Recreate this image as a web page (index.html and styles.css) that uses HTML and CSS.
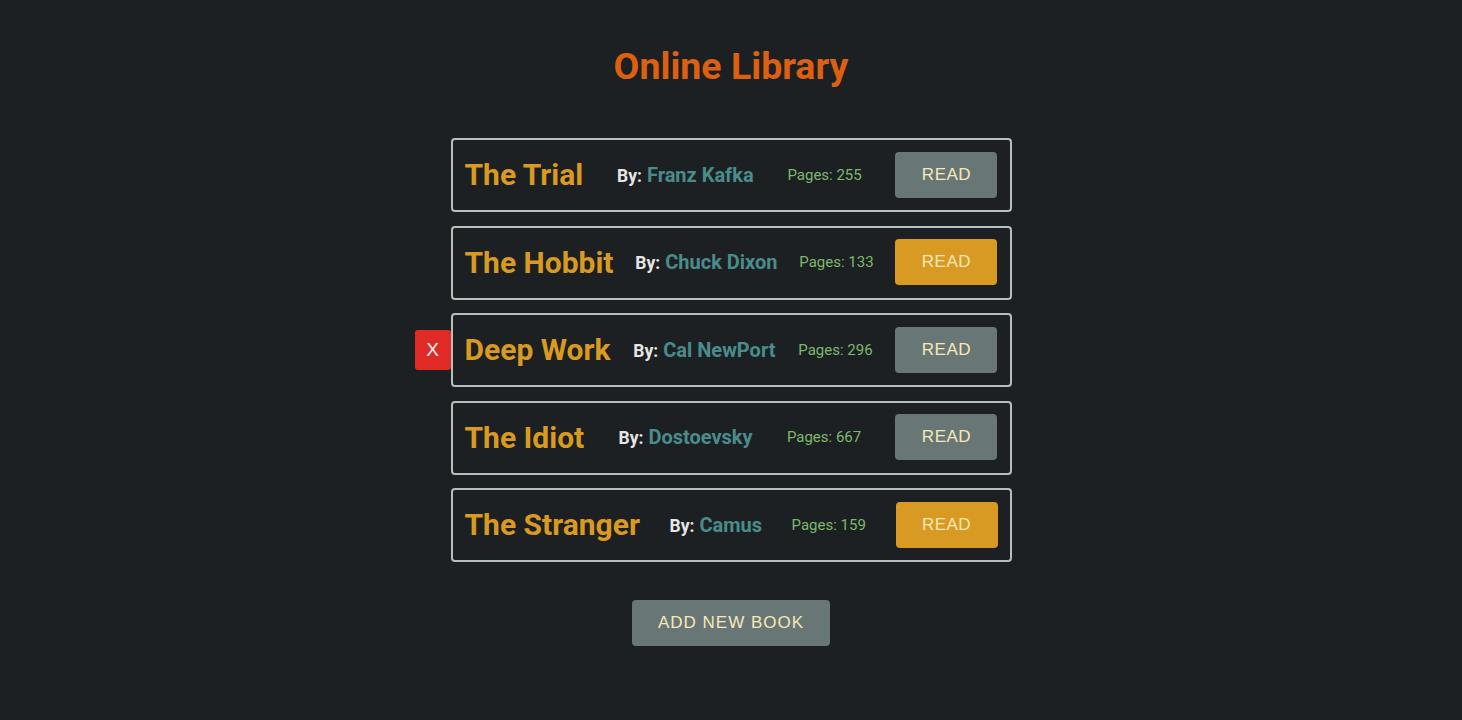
FILE: index.html
```html
<!DOCTYPE html>
<html>
<head>
<meta charset="utf-8">
<link rel="stylesheet" href="styles.css">
</head>
<body>
<main class="app">
  <h1 class="heading">Online Library</h1>
  <ul class="books">
    <li class="book">
      <h2 class="title">The Trial</h2>
      <p class="author"><span class="by">By:</span> Franz Kafka</p>
      <p class="pages">Pages: 255</p>
      <button class="read">READ</button>
    </li>
    <li class="book">
      <h2 class="title">The Hobbit</h2>
      <p class="author"><span class="by">By:</span> Chuck Dixon</p>
      <p class="pages">Pages: 133</p>
      <button class="read done">READ</button>
    </li>
    <li class="book">
      <button class="remove">X</button>
      <h2 class="title">Deep Work</h2>
      <p class="author"><span class="by">By:</span> Cal NewPort</p>
      <p class="pages">Pages: 296</p>
      <button class="read">READ</button>
    </li>
    <li class="book">
      <h2 class="title">The Idiot</h2>
      <p class="author"><span class="by">By:</span> Dostoevsky</p>
      <p class="pages">Pages: 667</p>
      <button class="read">READ</button>
    </li>
    <li class="book">
      <h2 class="title">The Stranger</h2>
      <p class="author"><span class="by">By:</span> Camus</p>
      <p class="pages">Pages: 159</p>
      <button class="read done">READ</button>
    </li>
  </ul>
  <button class="add">ADD NEW BOOK</button>
</main>
</body>
</html>
```
FILE: styles.css
```css
html, body {
  margin: 0;
  padding: 0;
  background: #1d2022;
  font-family: Roboto, "Liberation Sans", sans-serif;
}
.app {
  display: flex;
  flex-direction: column;
  align-items: center;
  padding-top: 44px;
}
.heading {
  margin: 0;
  color: #dd5f12;
  font-size: 37.5px;
  font-weight: 700;
  line-height: 44px;
}
.books {
  list-style: none;
  margin: 50px 0 0;
  padding: 0;
  width: 561px;
  display: flex;
  flex-direction: column;
  gap: 13.5px;
}
.book {
  position: relative;
  box-sizing: border-box;
  height: 74px;
  border: 2px solid #b6bfbb;
  border-radius: 4px;
  padding: 0 12px 1px 12px;
  display: flex;
  align-items: center;
  justify-content: space-between;
}
.title {
  margin: 0;
  color: #d99a22;
  font-size: 30px;
  font-weight: 700;
}
.author {
  margin: 0;
  color: #4a8c8c;
  font-size: 20px;
  font-weight: 700;
}
.by {
  color: #e6e6e6;
  font-size: 17.5px;
}
.pages {
  margin: 0;
  color: #7bb96c;
  font-size: 15px;
}
.read, .add {
  border: none;
  border-radius: 4px;
  background: #687775;
  color: #f7e8b8;
  font-family: "Liberation Sans", Arial, sans-serif;
  font-size: 17px;
  letter-spacing: 0.5px;
  cursor: pointer;
}
.read {
  width: 102px;
  height: 46px;
}
.read.done {
  background: #d89a22;
}
.remove {
  position: absolute;
  right: calc(100% + 2px);
  top: 50%;
  transform: translateY(-50%);
  width: 36px;
  height: 40px;
  border: none;
  border-radius: 3px;
  background: #df2a25;
  color: #f3f3f3;
  font-family: "Liberation Sans", Arial, sans-serif;
  font-size: 19px;
}
.add {
  margin-top: 38px;
  width: 198px;
  height: 46px;
  letter-spacing: 1px;
}
```
